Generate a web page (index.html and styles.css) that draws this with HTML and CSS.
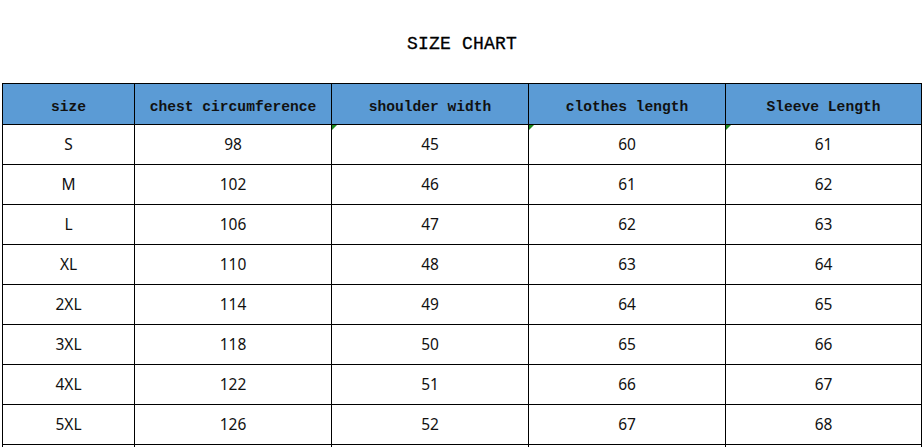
FILE: index.html
```html
<!DOCTYPE html>
<html>
<head>
<meta charset="utf-8">
<link rel="stylesheet" href="styles.css">
</head>
<body>
<div class="page">
  <h1 class="title">SIZE CHART</h1>
  <div class="chart">
    <div class="cell head">size</div>
    <div class="cell head">chest circumference</div>
    <div class="cell head">shoulder width</div>
    <div class="cell head">clothes length</div>
    <div class="cell head">Sleeve Length</div>

    <div class="cell">S</div><div class="cell">98</div><div class="cell mark">45</div><div class="cell mark">60</div><div class="cell mark">61</div>
    <div class="cell">M</div><div class="cell">102</div><div class="cell">46</div><div class="cell">61</div><div class="cell">62</div>
    <div class="cell">L</div><div class="cell">106</div><div class="cell">47</div><div class="cell">62</div><div class="cell">63</div>
    <div class="cell">XL</div><div class="cell">110</div><div class="cell">48</div><div class="cell">63</div><div class="cell">64</div>
    <div class="cell">2XL</div><div class="cell">114</div><div class="cell">49</div><div class="cell">64</div><div class="cell">65</div>
    <div class="cell">3XL</div><div class="cell">118</div><div class="cell">50</div><div class="cell">65</div><div class="cell">66</div>
    <div class="cell">4XL</div><div class="cell">122</div><div class="cell">51</div><div class="cell">66</div><div class="cell">67</div>
    <div class="cell">5XL</div><div class="cell">126</div><div class="cell">52</div><div class="cell">67</div><div class="cell">68</div>
    <div class="cell"></div><div class="cell"></div><div class="cell"></div><div class="cell"></div><div class="cell"></div>
  </div>
</div>
</body>
</html>
```

FILE: styles.css
```css
html, body {
  margin: 0;
  padding: 0;
  background: #ffffff;
  overflow: hidden;
}

.page {
  width: 924px;
  height: 447px;
  overflow: hidden;
}

.title {
  margin: 0;
  height: 83px;
  display: flex;
  align-items: center;
  justify-content: center;
  padding-top: 5px;
  box-sizing: border-box;
  font-family: "Liberation Mono", monospace;
  font-weight: normal;
  font-size: 18px;
  color: #000;
  letter-spacing: 0.2px;
  -webkit-text-stroke: 0.3px #000;
}

.chart {
  margin-left: 2px;
  display: grid;
  grid-template-columns: 132px 197px 197px 197px 196px;
  grid-auto-rows: 40px;
  grid-template-rows: 41px;
  width: max-content;
  border-left: 1px solid #000;
  border-top: 1px solid #000;
}

.cell {
  position: relative;
  box-sizing: border-box;
  border-right: 1px solid #000;
  border-bottom: 1px solid #000;
  display: flex;
  align-items: center;
  justify-content: center;
  padding-bottom: 1px;
  font-family: "Noto Sans", "Liberation Sans", sans-serif;
  font-size: 15.5px;
  color: #111;
  background: #fff;
}

.head {
  background: #5b9bd5;
  font-family: "Liberation Mono", monospace;
  font-weight: bold;
  font-size: 14.6px;
  color: #111;
  padding-top: 5px;
  padding-bottom: 0;
}

.mark::before {
  content: "";
  position: absolute;
  left: 0;
  top: 0;
  width: 0;
  height: 0;
  border-top: 5px solid #1e8a1e;
  border-right: 5px solid transparent;
}
```
